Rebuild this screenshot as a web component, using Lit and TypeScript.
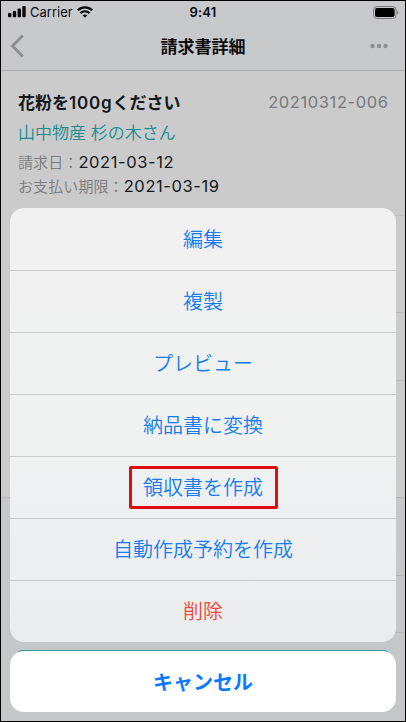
import { LitElement, html, css } from "lit";
import { customElement } from "lit/decorators.js";
import { classMap } from "lit/directives/class-map.js";

type Action = { label: string; danger?: boolean; marked?: boolean };

const ACTIONS: Action[] = [
  { label: "編集" },
  { label: "複製" },
  { label: "プレビュー" },
  { label: "納品書に変換" },
  { label: "領収書を作成", marked: true },
  { label: "自動作成予約を作成" },
  { label: "削除", danger: true },
];

@customElement("status-bar")
class StatusBar extends LitElement {
  static styles = css`
    :host {
      display: grid;
      grid-template-columns: 1fr auto 1fr;
      align-items: center;
      height: 22px;
      padding: 0 6px 0 7px;
      color: #0a0a0b;
      font-size: 13px;
    }
    .left {
      display: flex;
      align-items: center;
    }
    .carrier {
      margin: 0 4px 0 4px;
      font-size: 13px;
    }
    .time {
      font-weight: 600;
      font-size: 13px;
      letter-spacing: 0.2px;
      margin-right: 1px;
    }
    .battery {
      justify-self: end;
    }
    svg {
      display: block;
    }
  `;
  render() {
    return html`
      <div class="left">
        <svg width="18" height="12" viewBox="0 0 18 12" fill="currentColor">
          <rect x="0" y="7" width="3.4" height="4.2" rx="1" />
          <rect x="4.8" y="5" width="3.4" height="6.2" rx="1" />
          <rect x="9.6" y="2.6" width="3.4" height="8.6" rx="1" />
          <rect x="14.3" y="0" width="3.4" height="11.2" rx="1" />
        </svg>
        <span class="carrier">Carrier</span>
        <svg width="16" height="12" viewBox="0 0 16 12">
          <g fill="none" stroke="currentColor" stroke-width="2.3">
            <path d="M0.8 4.3C4.9 0.3 11.1 0.3 15.2 4.3" />
            <path d="M3.4 7.2C6.1 4.8 9.9 4.8 12.6 7.2" />
          </g>
          <path d="M8 11.8L5.6 9.3C7 8.1 9 8.1 10.4 9.3Z" fill="currentColor" />
        </svg>
      </div>
      <span class="time">9:41</span>
      <svg class="battery" width="26" height="13" viewBox="0 0 26 13">
        <rect x="0.5" y="0.5" width="22.6" height="12" rx="3.4" fill="none" stroke="#77787a" />
        <rect x="2" y="2" width="19.6" height="9" rx="2" fill="#000" />
        <path d="M24.4 4.5C25.9 5.2 25.9 7.8 24.4 8.5Z" fill="#77787a" />
      </svg>
    `;
  }
}

@customElement("action-sheet")
class ActionSheet extends LitElement {
  static styles = css`
    :host {
      display: flex;
      flex-direction: column;
      gap: 9px;
    }
    .group,
    .cancel {
      border-radius: 14px;
    }
    .group {
      background: linear-gradient(#f0f0f0, #f0f1f1 55%, #eaecee);
      overflow: hidden;
    }
    .item {
      display: flex;
      align-items: center;
      justify-content: center;
      box-sizing: border-box;
      height: 62px;
      border-top: 1px solid #cacbcc;
      color: #167cf0;
      font-size: 20px;
      font-weight: 350;
    }
    .item:first-child {
      border-top-color: transparent;
    }
    .item.danger {
      color: #f0453c;
    }
    .label {
      padding-top: 2px;
      line-height: 35px;
    }
    .marked .label {
      border: 3px solid #e00d10;
      border-radius: 2px;
      padding: 2px 11.5px 0;
    }
    .cancel {
      display: flex;
      align-items: center;
      justify-content: center;
      height: 61px;
      background: #fff;
      color: #087aff;
      font-size: 20px;
      font-weight: 600;
    }
  `;
  render() {
    return html`
      <div class="group">
        ${ACTIONS.map(
          (a) => html`<div class=${classMap({ item: true, danger: !!a.danger, marked: !!a.marked })}>
            <span class="label">${a.label}</span>
          </div>`
        )}
      </div>
      <div class="cancel">キャンセル</div>
    `;
  }
}

@customElement("app-root")
class AppRoot extends LitElement {
  static styles = css`
    :host {
      display: flex;
      flex-direction: column;
      position: relative;
      box-sizing: border-box;
      width: 406px;
      height: 722px;
      overflow: hidden;
      border: 1px solid #000;
      background: #c6c7c9;
      font-family: Inter, "Noto Sans CJK JP", sans-serif;
      white-space: nowrap;
    }
    .top {
      height: 70px;
      background: #c8c9cb;
      border-bottom: 1px solid #acacae;
      box-sizing: border-box;
    }
    .nav {
      display: grid;
      grid-template-columns: 24px 1fr 24px;
      align-items: center;
      height: 46px;
      padding: 0 17px 0 9px;
    }
    .title {
      justify-self: center;
      margin-left: 8px;
      font-size: 17px;
      font-weight: 700;
      color: #0c0c0d;
      line-height: 24px;
      padding-top: 1px;
    }
    .more {
      justify-self: end;
    }
    .summary {
      box-sizing: border-box;
      height: 144px;
      padding: 17px 17px 0;
      background: #cbcbcb;
      color: #111820;
    }
    .row {
      display: flex;
      justify-content: space-between;
      align-items: center;
      height: 26px;
    }
    .subject {
      font-size: 17px;
      font-weight: 600;
    }
    .latin {
      letter-spacing: 0.8px;
    }
    .number {
      color: #77797b;
      font-size: 16.5px;
      letter-spacing: 0.6px;
      margin-right: -0.6px;
      padding-top: 1px;
    }
    .client {
      height: 35px;
      display: flex;
      align-items: center;
      color: #168c8f;
      font-size: 17px;
      font-weight: 350;
    }
    .date {
      display: flex;
      align-items: center;
      height: 24px;
      font-size: 16.5px;
      letter-spacing: 0.6px;
    }
    .value {
      padding-top: 2px;
    }
    .key {
      color: #7b7c7d;
      font-size: 15px;
      font-weight: 350;
      letter-spacing: 0.1px;
    }
    .cell {
      box-sizing: border-box;
      flex: none;
      border-top: 1px solid #b5b5b6;
    }
    .plain {
      background: #cbcbcb;
      margin-left: 17px;
      border-color: #b9b9b9;
    }
    .details {
      background: #cbcbcb;
    }
    .h97 { height: 97px; }
    .h68 { height: 68px; }
    .h117 { height: 117px; }
    .h78 { height: 78px; }
    .h57 { height: 57px; }
    .h18 { height: 18px; }
    .inset { margin-left: 17px; }
    .button {
      flex: none;
      height: 44px;
      margin: 0 16px;
      border-radius: 5px;
      background: #389da2;
    }
    .sheet {
      position: absolute;
      left: 9px;
      right: 9px;
      top: 207px;
    }
  `;
  render() {
    return html`
      <div class="top">
        <status-bar></status-bar>
        <div class="nav">
          <svg width="15" height="24" viewBox="0 0 15 24">
            <path d="M12.8 1.5L2.5 12L12.8 22.5" fill="none" stroke="#8d8e90" stroke-width="3" />
          </svg>
          <span class="title">請求書詳細</span>
          <svg class="more" width="18" height="6" viewBox="0 0 18 6" fill="#8d8e90">
            <circle cx="2.5" cy="3" r="2.2" />
            <circle cx="9" cy="3" r="2.2" />
            <circle cx="15.5" cy="3" r="2.2" />
          </svg>
        </div>
      </div>
      <div class="summary">
        <div class="row">
          <span class="subject">花粉を<span class="latin">100g</span>ください</span>
          <span class="number">20210312-006</span>
        </div>
        <div class="client">山中物産 杉の木さん</div>
        <div class="date"><span class="key">請求日：</span><span class="value">2021-03-12</span></div>
        <div class="date"><span class="key">お支払い期限：</span><span class="value">2021-03-19</span></div>
      </div>
      <div class="details">
        <div class="cell plain h97"></div>
        <div class="cell plain h68"></div>
        <div class="cell plain h117"></div>
      </div>
      <div class="cell h78"></div>
      <div class="cell inset h57"></div>
      <div class="cell inset h18"></div>
      <div class="button"></div>
      <action-sheet class="sheet"></action-sheet>
    `;
  }
}
